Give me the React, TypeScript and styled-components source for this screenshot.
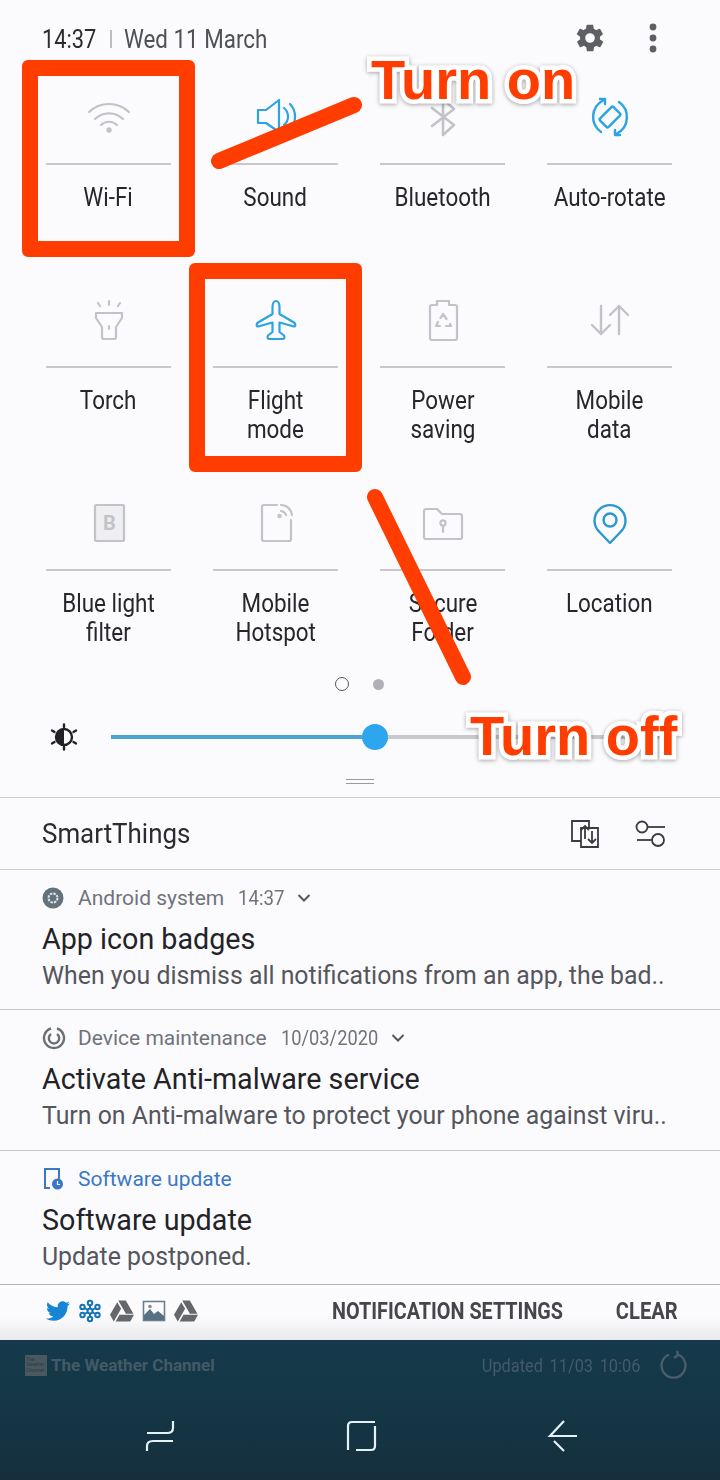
import React from "react";
import styled, { createGlobalStyle } from "styled-components";
import { FaGoogleDrive, FaTwitter } from "react-icons/fa";

const GlobalStyle = createGlobalStyle`
  html, body {
    margin: 0;
    padding: 0;
    background: #fbfbfe;
  }
`;

const GREY = "#c2c3c8";
const BLUE = "#2ba4e2";
const RED = "#ff3d00";

const Screen = styled.div`
  position: relative;
  width: 720px;
  height: 1480px;
  overflow: hidden;
  display: flex;
  flex-direction: column;
  background: #fbfbfe;
  color: #26262b;
  font-family: Roboto, "Liberation Sans", sans-serif;
`;

const Narrow = styled.span`
  display: inline-block;
  transform: scaleX(${(p) => p.$x ?? 0.88});
  transform-origin: ${(p) => p.$origin ?? "center"};
  white-space: nowrap;
`;

/* quick settings */
const Header = styled.header`
  height: 64px;
  display: flex;
  align-items: center;
  padding: 12px 63px 0 42px;
  box-sizing: border-box;
  font-size: 26px;
`;

const Clock = styled.div`
  width: 54px;
  color: #2b2b30;
  padding-top: 1px;
`;

const HeaderDate = styled.div`
  flex: 1;
  display: flex;
  align-items: center;
  color: #4f5157;
  padding-top: 1px;

  &::before {
    content: "";
    width: 2px;
    height: 18px;
    margin: 0 12px 0 14px;
    background: #bcbdc2;
  }
`;

const HeaderActions = styled.div`
  display: flex;
  align-items: center;
  gap: 43px;
`;

const Grid = styled.section`
  display: grid;
  grid-template-columns: repeat(4, 167px);
  padding: 0 25px;
`;

const Tile = styled.div`
  height: 203px;
  display: flex;
  flex-direction: column;
  align-items: center;
`;

const TileIcon = styled.div`
  height: 99px;
  flex: none;
  display: flex;
  align-items: center;
  justify-content: center;
  padding-top: 7px;
  box-sizing: border-box;
`;

const TileRule = styled.div`
  width: 125px;
  height: 2px;
  flex: none;
  background: #c8c8cd;
`;

const TileLabel = styled.div`
  margin-top: 18px;
  font-size: 25.5px;
  line-height: 29px;
  text-align: center;
  color: #26262b;
`;

const Pager = styled.div`
  height: 36px;
  margin-top: -7px;
  display: flex;
  align-items: center;
  justify-content: center;
  gap: 24px;
  padding-right: 2px;
`;

const PagerDot = styled.span`
  width: ${(p) => (p.$active ? "14px" : "11px")};
  height: ${(p) => (p.$active ? "14px" : "11px")};
  box-sizing: border-box;
  border-radius: 50%;
  border: ${(p) => (p.$active ? "1.5px solid #55565b" : "none")};
  background: ${(p) => (p.$active ? "transparent" : "#b0b1b6")};
`;

const BrightnessRow = styled.div`
  height: 70px;
  display: flex;
  align-items: center;
  padding: 0 52px 0 50px;
`;

const Track = styled.div`
  position: relative;
  flex: 1;
  height: 4px;
  margin-left: 33px;
  background: #c9c9cc;
`;

const TrackFill = styled.div`
  height: 100%;
  background: #4aa5d0;
`;

const Thumb = styled.div`
  position: absolute;
  top: -11px;
  width: 26px;
  height: 26px;
  margin-left: -13px;
  border-radius: 50%;
  background: #2ea6ee;
`;

const Handle = styled.div`
  width: 28px;
  height: 5px;
  margin: 7px auto 13px;
  border-top: 1.5px solid #9a9a9e;
  border-bottom: 1.5px solid #9a9a9e;
  box-sizing: border-box;
`;

/* notification list */
const SectionBar = styled.div`
  height: 73px;
  display: flex;
  align-items: center;
  padding: 0 53px 0 42px;
  box-sizing: border-box;
  border-top: 1.5px solid #cfcfd3;
  border-bottom: 1.5px solid #cfcfd3;
`;

const SectionTitle = styled.div`
  flex: 1;
  font-size: 27px;
  color: #2b2b30;
`;

const SectionActions = styled.div`
  display: flex;
  gap: 35px;
`;

const Notification = styled.article`
  height: ${(p) => p.$height}px;
  padding-left: 42px;
  box-sizing: border-box;
  border-bottom: 1.5px solid ${(p) => (p.$last ? "#b4b4b8" : "#c6c6ca")};
`;

const Meta = styled.div`
  height: 54px;
  display: flex;
  align-items: center;
  font-size: 21px;
  color: ${(p) => p.$color ?? "#70747a"};
  padding-top: 1px;
  box-sizing: border-box;
`;

const MetaIcon = styled.span`
  width: 36px;
  flex: none;
  display: flex;
`;

const MetaTime = styled.span`
  margin-left: 14px;
  color: #70747a;
`;

const Chevron = styled.svg`
  flex: none;
  margin-left: ${(p) => p.$gap}px;
`;

const Title = styled.div`
  font-size: 28.7px;
  line-height: 36px;
  color: #232327;
  margin-top: -3px;
`;

const Body = styled.div`
  font-size: 24.85px;
  line-height: 36px;
  color: #54565c;
  white-space: nowrap;
  padding-top: 1px;
`;

const Footer = styled.footer`
  height: 55px;
  box-sizing: border-box;
  display: flex;
  align-items: center;
  padding: 0 42px 3px 46px;
  background: linear-gradient(#fcfcfe 0%, #fbfbfd 60%, #e9e9ed 100%);
`;

const FooterIcons = styled.div`
  flex: 1;
  display: flex;
  align-items: center;
  gap: 8px;
`;

const FooterAction = styled.div`
  font-size: 24px;
  font-weight: 700;
  color: #45464c;
  margin-left: ${(p) => p.$gap ?? 0}px;
`;

/* home screen behind the panel */
const Behind = styled.div`
  flex: 1;
  background: linear-gradient(#153a4b 0%, #143645 50%, #162f3d 100%);
`;

const WeatherRow = styled.div`
  height: 50px;
  display: flex;
  align-items: center;
  padding: 0 32px 0 25px;
  color: #445a66;
`;

const WeatherLogo = styled.div`
  width: 22px;
  height: 21px;
  padding: 2px 1px;
  box-sizing: border-box;
  background: #4a5860;
  color: #2e3d45;
  font-size: 5px;
  line-height: 5.5px;
  overflow: hidden;
`;

const WeatherName = styled.div`
  flex: 1;
  margin-left: 4px;
  font-size: 17px;
  font-weight: 700;
`;

const WeatherUpdated = styled.div`
  font-size: 19px;
  margin-right: 20px;
  word-spacing: 3px;
`;

const NavBar = styled.nav`
  display: flex;
  gap: 169px;
  padding: 29px 0 0 144px;
`;

/* red annotations drawn on top of the screenshot */
const Highlight = styled.div`
  position: absolute;
  box-sizing: border-box;
  border: 16px solid ${RED};
  border-radius: 6px;
`;

const WifiHighlight = styled(Highlight)`
  left: 22px;
  top: 60px;
  width: 173px;
  height: 197px;
`;

const FlightHighlight = styled(Highlight)`
  left: 189px;
  top: 263px;
  width: 173px;
  height: 209px;
`;

const Strokes = styled.svg`
  position: absolute;
  left: 0;
  top: 0;
`;

const Callout = styled.div`
  position: absolute;
  left: ${(p) => p.$left}px;
  top: ${(p) => p.$top}px;
  font-family: "Liberation Sans", Arial, sans-serif;
  font-size: 56px;
  line-height: 1;
  font-weight: 700;
  white-space: nowrap;
  color: ${RED};
  -webkit-text-stroke: 9px #fff;
  paint-order: stroke fill;
  filter: drop-shadow(0 1px 2px rgba(0, 0, 0, 0.35));
`;

const Ico = ({ children, color = GREY, width = 2.2, size = 48, box = 48 }) => (
  <svg
    width={size}
    height={size}
    viewBox={`0 0 ${box} ${box}`}
    fill="none"
    stroke={color}
    strokeWidth={width}
    strokeLinecap="round"
    strokeLinejoin="round"
  >
    {children}
  </svg>
);

const tiles = [
  {
    label: ["Wi-Fi"],
    icon: (
      <Ico>
        <path d="M4 19A29 29 0 0 1 44 19" />
        <path d="M10 26A20 20 0 0 1 38 26" />
        <path d="M16 32A11.5 11.5 0 0 1 32 32" />
        <circle cx="24" cy="37" r="1.6" fill={GREY} />
      </Ico>
    ),
  },
  {
    label: ["Sound"],
    icon: (
      <Ico color={BLUE}>
        <path d="M6 17H14L27 7V39L14 30H6Z" />
        <path d="M32 15A11 11 0 0 1 32 32" />
        <path d="M38 11A18 18 0 0 1 38 36" />
      </Ico>
    ),
  },
  {
    label: ["Bluetooth"],
    icon: (
      <Ico width={2.6}>
        <path d="M13 15L35 32L24 42V6L35 16L13 33" />
      </Ico>
    ),
  },
  {
    label: ["Auto-rotate"],
    icon: (
      <Ico color={BLUE} width={2.4}>
        <rect x="14.5" y="18" width="19" height="12" rx="1.5" transform="rotate(-45 24 24)" />
        <path d="M15 39A18.5 18.5 0 0 1 17 7.5" />
        <path d="M14 6H19V11" />
        <path d="M33 9A18.5 18.5 0 0 1 31 40.5" />
        <path d="M34 42H29V37" />
      </Ico>
    ),
  },
  {
    label: ["Torch"],
    icon: (
      <Ico>
        <path d="M11 17H37V22L31 31V41A2 2 0 0 1 29 43H19A2 2 0 0 1 17 41V31L11 22Z" />
        <path d="M24 5V9M13 7L15 10M35 7L33 10M24 30V33" />
      </Ico>
    ),
  },
  {
    label: ["Flight", "mode"],
    icon: (
      <Ico color={BLUE}>
        <path d="M24 5C26.2 5 27.5 8 27.5 11V18L42 26.5C43.5 27.5 44 30.5 42 30.5L27.5 26.5V36L32 39.5C32.8 41 32.5 43 31 43H17C15.5 43 15.2 41 16 39.5L20.5 36V26.5L6 30.5C4 30.5 4.5 27.5 6 26.5L20.5 18V11C20.5 8 21.8 5 24 5Z" />
      </Ico>
    ),
  },
  {
    label: ["Power", "saving"],
    icon: (
      <Ico>
        <path d="M18 9V5H30V9H36A2 2 0 0 1 38 11V42A2 2 0 0 1 36 44H13A2 2 0 0 1 11 42V11A2 2 0 0 1 13 9Z" />
        <path d="M21.5 22L24 18L27.5 23M31 28L32 30H27M21 30H17L19 26" />
      </Ico>
    ),
  },
  {
    label: ["Mobile", "data"],
    icon: (
      <Ico width={2.4}>
        <path d="M15 10V38M6 29L15 38L24 29" />
        <path d="M33 38V10M24 19L33 10L42 19" />
      </Ico>
    ),
  },
  {
    label: ["Blue light", "filter"],
    icon: (
      <Ico>
        <rect x="10" y="6" width="29" height="36" rx="1" fill="#efeff2" />
        <text x="24.5" y="31" textAnchor="middle" fontSize="20" fontWeight="700" fill={GREY} stroke="none">
          B
        </text>
      </Ico>
    ),
  },
  {
    label: ["Mobile", "Hotspot"],
    icon: (
      <Ico>
        <path d="M25 6H12A2 2 0 0 0 10 8V40A2 2 0 0 0 12 42H37A2 2 0 0 0 39 40V21" />
        <path d="M29 6A11 11 0 0 1 40 16" />
        <path d="M29 12A6 6 0 0 1 34 16" />
        <circle cx="27.5" cy="17" r="1.2" fill={GREY} />
      </Ico>
    ),
  },
  {
    label: ["Secure", "Folder"],
    icon: (
      <Ico>
        <path d="M5 12A2 2 0 0 1 7 10H18L23 15H41A2 2 0 0 1 43 17V38A2 2 0 0 1 41 40H7A2 2 0 0 1 5 38Z" />
        <circle cx="24" cy="24" r="2.6" />
        <path d="M24 27V33" />
      </Ico>
    ),
  },
  {
    label: ["Location"],
    icon: (
      <Ico color="#2b98cf" width={2.4}>
        <path d="M24 44L13.5 33A15.5 15.5 0 1 1 34.5 33Z" />
        <circle cx="24" cy="21" r="6.5" />
      </Ico>
    ),
  },
];

const DARK = "#5e5f65";

const Down = ({ gap }) => (
  <Chevron $gap={gap} width="14" height="10" viewBox="0 0 14 10" fill="none" stroke="#55575c" strokeWidth="2">
    <path d="M1.5 2L7 7.5L12.5 2" />
  </Chevron>
);

export default function App() {
  return (
    <Screen>
      <GlobalStyle />
      <Header>
        <Clock>
          <Narrow $origin="left" $x={0.84}>14:37</Narrow>
        </Clock>
        <HeaderDate>
          <Narrow $origin="left" $x={0.86}>Wed 11 March</Narrow>
        </HeaderDate>
        <HeaderActions>
          <svg width="32" height="32" viewBox="0 0 24 24" fill={DARK}>
            <path d="M19.4 13a7.6 7.6 0 0 0 0-2l2.1-1.6a.5.5 0 0 0 .1-.6l-2-3.5a.5.5 0 0 0-.6-.2l-2.5 1a7.3 7.3 0 0 0-1.7-1l-.4-2.6a.5.5 0 0 0-.5-.4h-4a.5.5 0 0 0-.5.4l-.4 2.6a7.3 7.3 0 0 0-1.7 1l-2.5-1a.5.5 0 0 0-.6.2l-2 3.5a.5.5 0 0 0 .1.6L4.6 11a7.6 7.6 0 0 0 0 2l-2.1 1.6a.5.5 0 0 0-.1.6l2 3.5a.5.5 0 0 0 .6.2l2.5-1a7.3 7.3 0 0 0 1.7 1l.4 2.6a.5.5 0 0 0 .5.4h4a.5.5 0 0 0 .5-.4l.4-2.6a7.3 7.3 0 0 0 1.7-1l2.5 1a.5.5 0 0 0 .6-.2l2-3.5a.5.5 0 0 0-.1-.6ZM12 15.6a3.6 3.6 0 1 1 0-7.2 3.6 3.6 0 0 1 0 7.2Z" />
          </svg>
          <svg width="8" height="30" viewBox="0 0 8 30" fill={DARK}>
            <circle cx="4" cy="4" r="3.4" />
            <circle cx="4" cy="15" r="3.4" />
            <circle cx="4" cy="26" r="3.4" />
          </svg>
        </HeaderActions>
      </Header>

      <Grid>
        {tiles.map((tile) => (
          <Tile key={tile.label[0] + tile.label.length}>
            <TileIcon>{tile.icon}</TileIcon>
            <TileRule />
            <TileLabel>
              {tile.label.map((line) => (
                <div key={line}>
                  <Narrow>{line}</Narrow>
                </div>
              ))}
            </TileLabel>
          </Tile>
        ))}
      </Grid>

      <Pager>
        <PagerDot $active />
        <PagerDot />
      </Pager>

      <BrightnessRow>
        <svg width="28" height="28" viewBox="0 0 28 28" fill="none" stroke="#222226" strokeWidth="2.4" strokeLinecap="round">
          <circle cx="14" cy="14" r="8" />
          <path d="M14 6A8 8 0 0 0 14 22Z" fill="#222226" stroke="none" />
          <path d="M14 1.5V4M14 24V26.5M2 7.5L4.5 9M23.5 19L26 20.5M2 20.5L4.5 19M23.5 9L26 7.5" />
        </svg>
        <Track>
          <TrackFill style={{ width: `${(264 / 557) * 100}%` }} />
          <Thumb style={{ left: `${(264 / 557) * 100}%` }} />
        </Track>
      </BrightnessRow>
      <Handle />

      <SectionBar>
        <SectionTitle>
          <Narrow $origin="left" $x={0.96}>SmartThings</Narrow>
        </SectionTitle>
        <SectionActions>
          <svg width="30" height="30" viewBox="0 0 30 30" fill="none" stroke="#3a3b40" strokeWidth="1.8">
            <path d="M11 22H2V2H19V9" />
            <path d="M11 9H28V28H11Z" fill="#fbfbfe" />
            <path d="M15 20V7M11 11L15 7L19 11" />
            <path d="M22 12V24M18 20L22 24L26 20" />
          </svg>
          <svg width="32" height="30" viewBox="0 0 32 30" fill="none" stroke="#3a3b40" strokeWidth="1.8">
            <circle cx="7" cy="8" r="5.5" />
            <path d="M13 8H30" />
            <circle cx="23" cy="21" r="6" />
            <path d="M2 21H17" />
          </svg>
        </SectionActions>
      </SectionBar>

      <Notification $height={140}>
        <Meta>
          <MetaIcon>
            <svg width="22" height="22" viewBox="0 0 22 22">
              <circle cx="11" cy="11" r="10.5" fill="#64727c" />
              <circle cx="11" cy="11" r="4.5" fill="none" stroke="#dfe3e6" strokeWidth="2" strokeDasharray="2.5 1" />
            </svg>
          </MetaIcon>
          <span>Android system</span>
          <MetaTime>
            <Narrow $origin="left" $x={0.89}>14:37</Narrow>
          </MetaTime>
          <Down gap={6} />
        </Meta>
        <Title>App icon badges</Title>
        <Body>When you dismiss all notifications from an app, the bad..</Body>
      </Notification>

      <Notification $height={141}>
        <Meta>
          <MetaIcon>
            <svg width="24" height="24" viewBox="0 0 24 24" fill="none" stroke="#6c7074" strokeWidth="2.4">
              <path d="M9 2.5A10 10 0 1 0 15 2.5" />
              <path d="M9 8A5.2 5.2 0 1 0 15 8" />
            </svg>
          </MetaIcon>
          <span>Device maintenance</span>
          <MetaTime>
            <Narrow $origin="left" $x={0.87}>10/03/2020</Narrow>
          </MetaTime>
          <Down gap={-1} />
        </Meta>
        <Title>Activate Anti-malware service</Title>
        <Body>Turn on Anti-malware to protect your phone against viru..</Body>
      </Notification>

      <Notification $height={134} $last>
        <Meta $color="#3a78c6">
          <MetaIcon>
            <svg width="22" height="24" viewBox="0 0 22 24" fill="none" stroke="#3a78c6" strokeWidth="2">
              <path d="M8 21H3V2H17V13" />
              <circle cx="15.5" cy="17" r="5.5" fill="#3a78c6" stroke="none" />
              <path d="M15.5 14V17.5H18" stroke="#fff" strokeWidth="1.2" />
            </svg>
          </MetaIcon>
          <span>Software update</span>
        </Meta>
        <Title>Software update</Title>
        <Body>Update postponed.</Body>
      </Notification>

      <Footer>
        <FooterIcons>
          <FaTwitter size={24} color="#1686d4" />
          <svg width="24" height="24" viewBox="0 0 24 24" fill="none" stroke="#1672b4" strokeWidth="2">
            <circle cx="12" cy="12" r="2.5" />
            <circle cx="12" cy="4" r="2.2" />
            <circle cx="12" cy="20" r="2.2" />
            <circle cx="4.5" cy="8" r="2.2" />
            <circle cx="19.5" cy="8" r="2.2" />
            <circle cx="4.5" cy="16" r="2.2" />
            <circle cx="19.5" cy="16" r="2.2" />
            <path d="M12 6V9.5M12 14.5V18M6.5 9L10 11M17.5 9L14 11M6.5 15L10 13M17.5 15L14 13" />
          </svg>
          <FaGoogleDrive size={24} color="#66676c" />
          <svg width="24" height="24" viewBox="0 0 24 24">
            <rect x="1.5" y="2.5" width="21" height="19" fill="none" stroke="#6d7f8e" strokeWidth="1.6" />
            <path d="M2 21V16L8 10L12 15L16 12L22 17V21Z" fill="#577084" />
            <circle cx="8" cy="7.5" r="1.8" fill="#7e8f9c" />
          </svg>
          <FaGoogleDrive size={24} color="#66676c" />
        </FooterIcons>
        <FooterAction>
          <Narrow $x={0.825} $origin="right">NOTIFICATION SETTINGS</Narrow>
        </FooterAction>
        <FooterAction $gap={41}>
          <Narrow $x={0.84} $origin="right">CLEAR</Narrow>
        </FooterAction>
      </Footer>

      <Behind>
        <WeatherRow>
          <WeatherLogo>The Weather Channel</WeatherLogo>
          <WeatherName>The Weather Channel</WeatherName>
          <WeatherUpdated>
            <Narrow $origin="right" $x={0.86}>Updated 11/03 10:06</Narrow>
          </WeatherUpdated>
          <svg width="28" height="28" viewBox="0 0 28 28" fill="none" stroke="#4a5d68" strokeWidth="2.4">
            <path d="M18 3.5A12 12 0 1 1 9 3.5" />
            <path d="M17 0L18 4L14 7" />
          </svg>
        </WeatherRow>
        <NavBar>
          <svg width="32" height="34" viewBox="0 0 32 34" fill="none" stroke="#e4f1f6" strokeWidth="2.2">
            <path d="M3 14H23C26 14 29 13 29 9V2" />
            <path d="M29 22H9C6 22 3 23 3 27V32" />
          </svg>
          <svg width="32" height="34" viewBox="0 0 32 34" fill="none" stroke="#e4f1f6" strokeWidth="2.2">
            <path d="M3 31V7C3 4.5 4.5 3 7 3H30" />
            <path d="M30 7V27C30 29.5 28.5 31 26 31H11" />
          </svg>
          <svg width="32" height="34" viewBox="0 0 32 34" fill="none" stroke="#e4f1f6" strokeWidth="2.2">
            <path d="M18 2L4 17H31" />
            <path d="M8 22L18 32" />
          </svg>
        </NavBar>
      </Behind>

      <WifiHighlight />
      <FlightHighlight />
      <Strokes width="720" height="1480" fill="none" stroke={RED} strokeWidth="16" strokeLinecap="round">
        <path d="M219 161L354 105" />
        <path d="M375 497L463 677" />
      </Strokes>
      <Callout $left={371} $top={52}>Turn on</Callout>
      <Callout $left={470} $top={708}>Turn off</Callout>
    </Screen>
  );
}
